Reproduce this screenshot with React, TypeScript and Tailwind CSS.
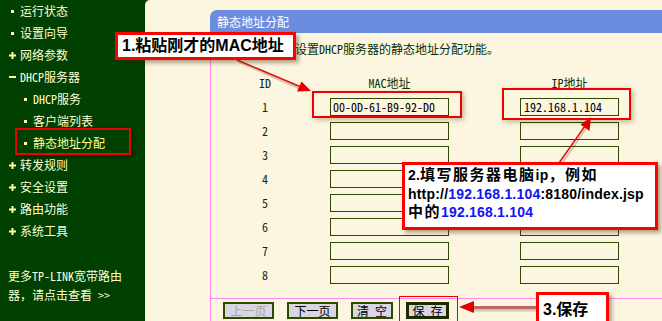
import React from "react";

const UI = "font-['Noto_Sans_Mono_CJK_SC','Noto_Sans_CJK_SC',monospace]";
const CALL = "font-['Liberation_Sans','Noto_Sans_CJK_SC',sans-serif] font-bold";

type Item = { label: string; kind: "dot" | "plus" | "minus"; level: 1 | 2; active?: boolean };

const items: Item[] = [
  { label: "运行状态", kind: "dot", level: 1 },
  { label: "设置向导", kind: "dot", level: 1 },
  { label: "网络参数", kind: "plus", level: 1 },
  { label: "DHCP服务器", kind: "minus", level: 1 },
  { label: "DHCP服务", kind: "dot", level: 2 },
  { label: "客户端列表", kind: "dot", level: 2 },
  { label: "静态地址分配", kind: "dot", level: 2, active: true },
  { label: "转发规则", kind: "plus", level: 1 },
  { label: "安全设置", kind: "plus", level: 1 },
  { label: "路由功能", kind: "plus", level: 1 },
  { label: "系统工具", kind: "plus", level: 1 },
];

function Marker({ kind }: { kind: Item["kind"] }) {
  return (
    <span className="w-[8px] h-[8px] flex items-center justify-center shrink-0">
      {kind === "dot" && <span className="block w-[3px] h-[3px] bg-[#FFFFA0]" />}
      {kind === "minus" && <span className="block w-[7px] h-[2px] bg-[#FFFFA0]" />}
      {kind === "plus" && (
        <svg width="7" height="7" viewBox="0 0 7 7">
          <rect x="0" y="2.5" width="7" height="2" fill="#FFFFA0" />
          <rect x="2.5" y="0" width="2" height="7" fill="#FFFFA0" />
        </svg>
      )}
    </span>
  );
}

const rows = [1, 2, 3, 4, 5, 6, 7, 8];

export default function App() {
  return (
    <div className={`relative w-[662px] h-[321px] overflow-hidden flex bg-[#004000] ${UI} text-[12px]`}>
      {/* Sidebar */}
      <div className="w-[145px] shrink-0 flex flex-col text-[#FFFFD8]">
        {items.map((it) => (
          <div
            key={it.label}
            className={`h-[22px] flex items-center gap-[4px] ${it.level === 1 ? "pl-[8px]" : "pl-[21px]"} ${
              it.active ? "text-[#FFFF99]" : ""
            }`}
          >
            <Marker kind={it.kind} />
            <span className="leading-none whitespace-nowrap">{it.label}</span>
          </div>
        ))}
        <div className="mt-[24px] pl-[8px] leading-[19px] whitespace-nowrap">
          更多TP-LINK宽带路由
          <br />
          器，请点击查看 &gt;&gt;
        </div>
      </div>

      {/* Main */}
      <div className="flex-1 bg-[#FCF6E0] rounded-tl-[5px] flex flex-col pt-[10px]">
        <div className="ml-[65px] flex-1 flex flex-col">
          <div className="h-[23px] bg-[#6B8CDF] rounded-tl-[7px] text-white flex items-center pl-[7px]">
            静态地址分配
          </div>
          <div className="flex-1 border-l border-[#FF88EE] flex flex-col text-[#083008]">
            <div className="h-[265px] flex flex-col">
              <div className="pl-[60px] pt-[9px] h-[38px] leading-[14px] whitespace-nowrap">
                本页设置DHCP服务器的静态地址分配功能。
              </div>
              <div className="h-[24px] flex items-center pl-[29px]">
                <div className="w-[50px] text-center">ID</div>
                <div className="ml-[40px] w-[119px] text-center">MAC地址</div>
                <div className="ml-[71px] w-[99px] text-center">IP地址</div>
              </div>
              {rows.map((r) => (
                <div key={r} className="h-[24px] flex items-center pl-[29px]">
                  <div className="w-[50px] text-center">{r}</div>
                  <div className="ml-[40px] w-[119px] h-[18px] border-[1.5px] border-[#2F4800] bg-[#FCF6E0] flex items-center pl-[2px] text-black">
                    {r === 1 ? "00-0D-61-B9-92-D0" : ""}
                  </div>
                  <div className="ml-[71px] w-[99px] h-[18px] border-[1.5px] border-[#2F4800] bg-[#FCF6E0] flex items-center pl-[3px] text-black">
                    {r === 1 ? "192.168.1.104" : ""}
                  </div>
                </div>
              ))}
            </div>
            <div className="flex-1 border-t border-[#FF88EE] flex items-start pt-[3px] pl-[12px] gap-[13px]">
              <div className="w-[51px] h-[17px] border-2 border-[#2F4800] bg-[#D9D5E3] flex items-center justify-center text-[#A8A89C] leading-none">
                上一页
              </div>
              <div className="w-[51px] h-[17px] border-2 border-[#2F4800] bg-[#D9D5E3] flex items-center justify-center text-black leading-none">
                下一页
              </div>
              <div className="w-[42px] h-[17px] border-2 border-[#2F4800] bg-[#D9D5E3] flex items-center justify-center text-black leading-none">
                清 空
              </div>
              <div className="w-[43px] h-[17px] border-[3px] border-[#1C2C00] bg-[#D9D5E3] flex items-center justify-center text-black leading-none">
                保 存
              </div>
            </div>
          </div>
        </div>
      </div>

      {/* Annotation: sidebar highlight */}
      <div className="absolute left-[15px] top-[128px] w-[116px] h-[27px] border-2 border-[#F00000] shadow-[2px_2px_4px_rgba(0,0,0,0.45)]" />

      {/* Annotation: MAC and IP boxes */}
      <div className="absolute left-[312px] top-[91px] w-[150px] h-[27px] border-2 border-[#F00000] shadow-[2px_2px_5px_rgba(90,70,20,0.35)]" />
      <div className="absolute left-[502px] top-[88px] w-[129px] h-[32px] border-2 border-[#F00000] shadow-[2px_2px_5px_rgba(90,70,20,0.35)]" />

      {/* Annotation: save button box */}
      <div className="absolute left-[399px] top-[296px] w-[59px] h-[40px] border-[1.5px] border-[#F00000]" />

      {/* Arrows */}
      <svg className="absolute left-0 top-0 pointer-events-none" width="662" height="321" viewBox="0 0 662 321">
        <g opacity="0.25">
          <line x1="239" y1="62" x2="303" y2="90" stroke="#5a4010" strokeWidth="2" />
          <line x1="561" y1="165" x2="587" y2="127" stroke="#5a4010" strokeWidth="2" />
          <line x1="537" y1="310" x2="470" y2="310" stroke="#5a4010" strokeWidth="3" />
        </g>
        <line x1="237" y1="60" x2="301" y2="87" stroke="#E01010" strokeWidth="1.5" />
        <polygon points="311,91 297,91.5 301.5,81.5" fill="#E00000" />
        <line x1="559" y1="163" x2="585" y2="126" stroke="#E01010" strokeWidth="1.5" />
        <polygon points="591,117 589.5,131 580.5,124.5" fill="#E00000" />
        <line x1="537" y1="307.5" x2="470" y2="307.5" stroke="#C06868" strokeWidth="3" />
        <polygon points="459,307 474,301 474,313" fill="#E00000" />
      </svg>

      {/* Callout 1 */}
      <div className={`absolute left-[115px] top-[32px] w-[181px] h-[28px] bg-white border-[3px] border-[#FF0000] shadow-[3px_3px_4px_rgba(60,40,0,0.4)] flex items-center pl-[4px] text-black text-[16px] leading-none ${CALL}`}>
        1.粘贴刚才的MAC地址
      </div>

      {/* Callout 2 */}
      <div className={`absolute left-[402px] top-[162px] w-[256px] h-[68px] bg-white border-[3px] border-[#FF0000] shadow-[3px_3px_4px_rgba(60,40,0,0.4)] pl-[3px] pt-[1px] text-black text-[14px] leading-[18.5px] tracking-[0.2px] whitespace-nowrap ${CALL}`}>
        <div>
          2.<span className="text-[15px] tracking-[1.5px]">填写服务器电脑</span>ip<span className="text-[15px] tracking-[1.5px]">，例如</span>
        </div>
        <div>
          http://<span className="text-[#1414F0]">192.168.1.104</span>:8180/index.jsp
        </div>
        <div>
          <span className="text-[15px] tracking-[1.5px]">中的</span>
          <span className="text-[#1414F0]">192.168.1.104</span>
        </div>
      </div>

      {/* Callout 3 */}
      <div className={`absolute left-[536px] top-[292px] w-[73px] h-[40px] bg-white border-[3px] border-[#FF0000] shadow-[3px_3px_4px_rgba(60,40,0,0.4)] pl-[4px] pt-[6px] text-black text-[16px] leading-[18px] ${CALL}`}>
        3.保存
      </div>
    </div>
  );
}
